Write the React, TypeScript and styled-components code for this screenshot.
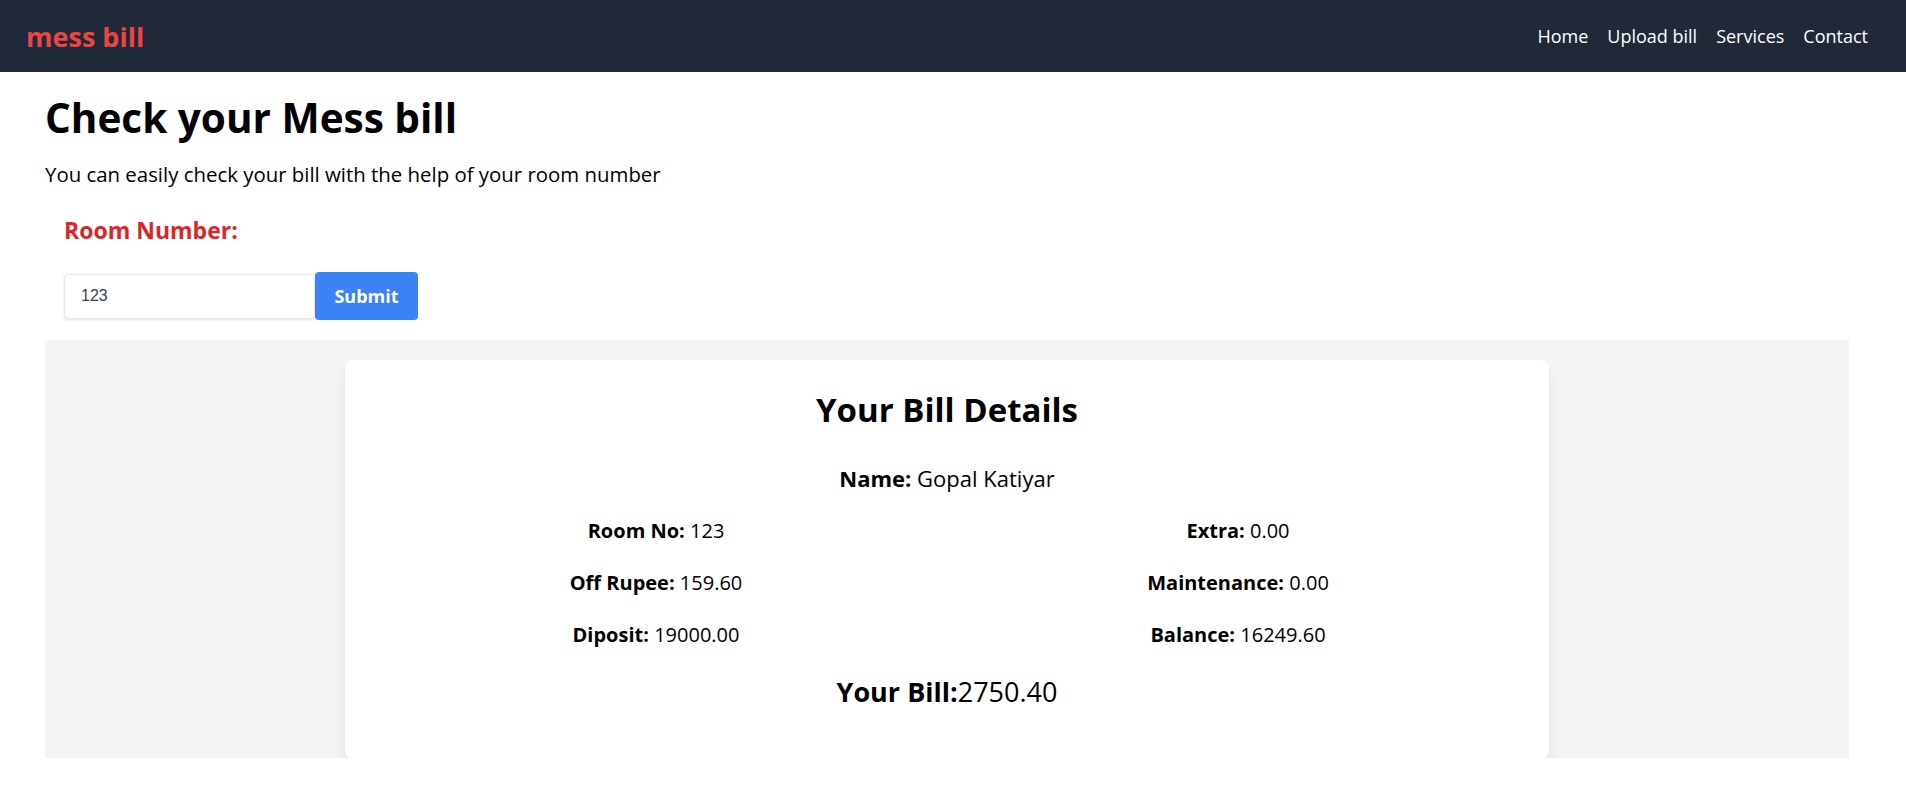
import React from 'react';
import styled, { createGlobalStyle } from 'styled-components';

const leftFields = [
  { label: 'Room No:', value: '123' },
  { label: 'Off Rupee:', value: '159.60' },
  { label: 'Diposit:', value: '19000.00' },
];

const rightFields = [
  { label: 'Extra:', value: '0.00' },
  { label: 'Maintenance:', value: '0.00' },
  { label: 'Balance:', value: '16249.60' },
];

const navLinks = ['Home', 'Upload bill', 'Services', 'Contact'];

export default function App() {
  return (
    <>
      <GlobalStyle />
      <Navbar>
        <Logo>mess bill</Logo>
        <NavList>
          {navLinks.map((link) => (
            <NavItem key={link}>{link}</NavItem>
          ))}
        </NavList>
      </Navbar>
      <Main>
        <Title>Check your Mess bill</Title>
        <Intro>You can easily check your bill with the help of your room number</Intro>
        <Form onSubmit={(e) => e.preventDefault()}>
          <Label htmlFor='room'>Room Number:</Label>
          <InputRow>
            <RoomInput id='room' defaultValue='123' />
            <SubmitButton type='submit'>Submit</SubmitButton>
          </InputRow>
        </Form>
        <ResultSection>
          <Card>
            <CardTitle>Your Bill Details</CardTitle>
            <NameLine>
              <b>Name:</b> Gopal Katiyar
            </NameLine>
            <FieldGrid>
              <Column>
                {leftFields.map((f) => (
                  <Field key={f.label}>
                    <b>{f.label}</b> {f.value}
                  </Field>
                ))}
              </Column>
              <Column>
                {rightFields.map((f) => (
                  <Field key={f.label}>
                    <b>{f.label}</b> {f.value}
                  </Field>
                ))}
              </Column>
            </FieldGrid>
            <Total>
              <b>Your Bill:</b>2750.40
            </Total>
          </Card>
        </ResultSection>
      </Main>
    </>
  );
}

const GlobalStyle = createGlobalStyle`
  * {
    box-sizing: border-box;
  }
  body {
    margin: 0;
    background: #ffffff;
    color: #000000;
    font-family: 'Segoe UI', 'Open Sans', 'Liberation Sans', sans-serif;
  }
`;

const Navbar = styled.nav`
  display: flex;
  align-items: center;
  justify-content: space-between;
  height: 72px;
  padding: 0 38px 0 26px;
  background-color: #1f2937;
`;

const Logo = styled.div`
  color: #ef4444;
  font-size: 27px;
  font-weight: 700;
`;

const NavList = styled.ul`
  display: flex;
  gap: 19px;
  margin: 0;
  padding: 0;
  list-style: none;
`;

const NavItem = styled.li`
  color: #ffffff;
  font-size: 18px;
`;

const Main = styled.main`
  padding: 0 57px 0 45px;
`;

const Title = styled.h1`
  margin: 24px 0 0;
  font-size: 40.5px;
  font-weight: 700;
  line-height: 44px;
`;

const Intro = styled.p`
  margin: 20px 0 0;
  font-size: 20.4px;
  line-height: 28px;
`;

const Form = styled.form`
  padding: 0 0 20px 19px;
`;

const Label = styled.label`
  display: block;
  margin-top: 26px;
  color: #dc2626;
  font-size: 23px;
  font-weight: 700;
  line-height: 32px;
`;

const InputRow = styled.div`
  display: flex;
  align-items: center;
  margin-top: 26px;
`;

const RoomInput = styled.input`
  width: 251px;
  height: 45px;
  padding: 0 16px;
  border: 1px solid #e5e7eb;
  border-radius: 4px;
  box-shadow: 0 1px 3px rgba(0, 0, 0, 0.12);
  color: #374151;
  font-family: 'Liberation Sans', Arial, sans-serif;
  font-size: 16px;
  outline: none;
`;

const SubmitButton = styled.button`
  width: 103px;
  height: 48px;
  border: none;
  border-radius: 4px;
  background-color: #3b82f6;
  color: #ffffff;
  font-family: inherit;
  font-size: 18px;
  font-weight: 700;
`;

const ResultSection = styled.section`
  display: flex;
  justify-content: center;
  padding-top: 20px;
  background-color: #f3f4f6;
`;

const Card = styled.div`
  width: 1204px;
  margin-bottom: -1px;
  padding: 32px 20px 51px;
  background: #ffffff;
  border-radius: 8px;
  box-shadow: 0 10px 15px -3px rgba(0, 0, 0, 0.1), 0 4px 6px -4px rgba(0, 0, 0, 0.1);
  text-align: center;
`;

const CardTitle = styled.h2`
  margin: 0;
  font-size: 33px;
  font-weight: 700;
  line-height: 36px;
`;

const NameLine = styled.p`
  margin: 36px 0 0;
  font-size: 22px;
  line-height: 28px;
`;

const FieldGrid = styled.div`
  display: grid;
  grid-template-columns: 1fr 1fr;
  margin-top: 13px;
`;

const Column = styled.div`
  display: flex;
  flex-direction: column;
`;

const Field = styled.p`
  margin: 12px 0;
  font-size: 20px;
  line-height: 28px;
`;

const Total = styled.p`
  margin: 15px 0 0;
  font-size: 27px;
  line-height: 32px;
`;
